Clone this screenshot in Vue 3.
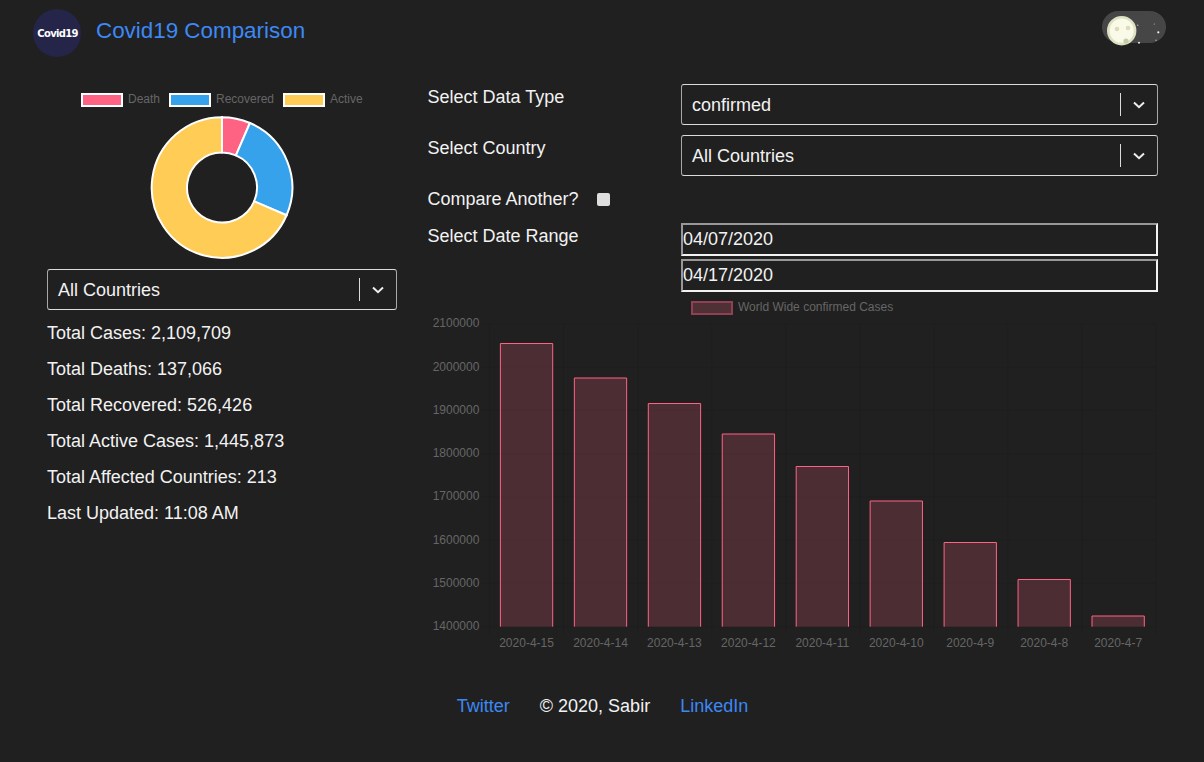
<script setup>
const stats = [
  'Total Cases: 2,109,709',
  'Total Deaths: 137,066',
  'Total Recovered: 526,426',
  'Total Active Cases: 1,445,873',
  'Total Affected Countries: 213',
  'Last Updated: 11:08 AM'
]

const cx = 222
const cy = 187.5
const outer = 70.3
const inner = 35
const slices = [
  { value: 137066, color: '#ff6384' },
  { value: 526426, color: '#36a2eb' },
  { value: 1445873, color: '#ffcd56' }
]
const total = slices.reduce((s, d) => s + d.value, 0)
let angle = -Math.PI / 2
const point = (r, a) => `${(cx + r * Math.cos(a)).toFixed(2)} ${(cy + r * Math.sin(a)).toFixed(2)}`
const arcs = slices.map((s) => {
  const start = angle
  const end = start + (s.value / total) * Math.PI * 2
  angle = end
  const large = end - start > Math.PI ? 1 : 0
  return {
    color: s.color,
    d: `M${point(outer, start)} A${outer} ${outer} 0 ${large} 1 ${point(outer, end)} L${point(inner, end)} A${inner} ${inner} 0 ${large} 0 ${point(inner, start)} Z`
  }
})

const legend = [
  { x: 82, label: 'Death', lx: 128, color: '#ff6384' },
  { x: 170, label: 'Recovered', lx: 216, color: '#36a2eb' },
  { x: 284, label: 'Active', lx: 330, color: '#ffcd56' }
]

const bottom = 626.7
const yTicks = ['2100000', '2000000', '1900000', '1800000', '1700000', '1600000', '1500000', '1400000'].map((label, i) => ({
  label,
  y: 323.9 + i * 43.25
}))
const gridX = Array.from({ length: 10 }, (_, i) => 489.5 + i * 74.05)
const barTops = [343.5, 378, 403.5, 434, 466.5, 501, 542.5, 579.5, 616]
const barNames = ['2020-4-15', '2020-4-14', '2020-4-13', '2020-4-12', '2020-4-11', '2020-4-10', '2020-4-9', '2020-4-8', '2020-4-7']
const bars = barTops.map((top, i) => {
  const x = 500.4 + i * 73.95
  const w = 52.3
  return {
    name: barNames[i],
    mid: x + w / 2,
    fill: `M${x} ${top} H${x + w} V${bottom} H${x} Z`,
    edge: `M${x} ${bottom} V${top} H${x + w} V${bottom}`
  }
})
</script>

<template>
  <div class="page">
    <header class="top">
      <div class="brand">
        <div class="logo"><span>Covid19</span></div>
        <h1 class="title">Covid19 Comparison</h1>
      </div>
      <svg class="toggle" width="70" height="40" viewBox="1098 9 70 40" aria-label="Theme toggle">
        <rect x="1102" y="11" width="64" height="32" rx="16" fill="#464646" />
        <circle cx="1137.7" cy="25.3" r="0.7" fill="#bbb" />
        <circle cx="1154.3" cy="24" r="0.6" fill="#bbb" />
        <circle cx="1158.3" cy="32.3" r="1.1" fill="#eee" />
        <circle cx="1156" cy="40.3" r="0.7" fill="#bbb" />
        <circle cx="1139" cy="42.7" r="1" fill="#eee" />
        <circle cx="1121.7" cy="30.7" r="13.4" fill="#fafae8" stroke="#dfe2c2" stroke-width="2.6" />
        <circle cx="1117" cy="29" r="2.3" fill="#dcdcbc" />
        <circle cx="1128" cy="28" r="2.3" fill="#dcdcbc" />
        <circle cx="1126" cy="41" r="2.6" fill="#c8cbaa" />
      </svg>
    </header>

    <main class="content">
      <section class="left">
        <svg class="donut" width="350" height="177" viewBox="47 85 350 177">
          <g v-for="item in legend" :key="item.label">
            <rect :x="item.x" y="94" width="40" height="12" :fill="item.color" stroke="#fff" stroke-width="2" />
            <text class="tick" :x="item.lx" y="103">{{ item.label }}</text>
          </g>
          <path v-for="arc in arcs" :key="arc.color" :d="arc.d" :fill="arc.color" stroke="#fff" stroke-width="2" />
        </svg>
        <div class="select">
          <span class="value">All Countries</span>
          <span class="sep"></span>
          <svg class="chev" width="12" height="8" viewBox="0 0 12 8"><path d="M1 1.5 L6 6.2 L11 1.5" fill="none" stroke="#eee" stroke-width="2" /></svg>
        </div>
        <ul class="stats">
          <li v-for="line in stats" :key="line">{{ line }}</li>
        </ul>
      </section>

      <section class="right">
        <div class="form">
          <label class="label">Select Data Type</label>
          <div class="select">
            <span class="value">confirmed</span>
            <span class="sep"></span>
            <svg class="chev" width="12" height="8" viewBox="0 0 12 8"><path d="M1 1.5 L6 6.2 L11 1.5" fill="none" stroke="#eee" stroke-width="2" /></svg>
          </div>
          <label class="label">Select Country</label>
          <div class="select">
            <span class="value">All Countries</span>
            <span class="sep"></span>
            <svg class="chev" width="12" height="8" viewBox="0 0 12 8"><path d="M1 1.5 L6 6.2 L11 1.5" fill="none" stroke="#eee" stroke-width="2" /></svg>
          </div>
          <div class="compare">
            <span>Compare Another?</span>
            <input class="check" type="checkbox" />
          </div>
          <label class="label date-label">Select Date Range</label>
          <div class="dates">
            <input class="date" type="text" value="04/07/2020" />
            <input class="date" type="text" value="04/17/2020" />
          </div>
        </div>

        <svg class="bars" width="731" height="364" viewBox="427 296 731 364">
          <rect x="692" y="302" width="40" height="12" fill="#4f3034" stroke="#8f4054" stroke-width="2" />
          <text class="tick" x="738" y="311">World Wide confirmed Cases</text>
          <line v-for="x in gridX" :key="x" :x1="x" :x2="x" y1="324" y2="636.5" class="grid" />
          <line v-for="t in yTicks" :key="t.label" x1="480" x2="1156" :y1="t.y" :y2="t.y" class="grid" />
          <text v-for="t in yTicks" :key="'l' + t.label" class="tick" x="479.4" :y="t.y + 3.4" text-anchor="end">{{ t.label }}</text>
          <g v-for="b in bars" :key="b.name">
            <path :d="b.fill" fill="rgba(255,99,132,0.2)" />
            <path :d="b.edge" fill="none" stroke="#ff6384" stroke-width="1" />
            <text class="tick" :x="b.mid" y="647" text-anchor="middle">{{ b.name }}</text>
          </g>
        </svg>
      </section>
    </main>

    <footer class="foot">
      <a class="link">Twitter</a>
      <span>© 2020, Sabir</span>
      <a class="link">LinkedIn</a>
    </footer>
  </div>
</template>

<style>
html, body {
  background: #202020;
}
</style>

<style scoped>
.page {
  width: 1204px;
  height: 762px;
  overflow: hidden;
  background: #202020;
  color: #f2f2f2;
  font-family: "Liberation Sans", Arial, sans-serif;
  font-size: 18px;
}
.top {
  display: flex;
  justify-content: space-between;
  align-items: flex-start;
  height: 84px;
  box-sizing: border-box;
  padding: 9px 36px 0 33px;
}
.brand {
  display: flex;
  align-items: flex-start;
  gap: 15px;
}
.logo {
  width: 48px;
  height: 48px;
  border-radius: 50%;
  background: #25254a;
  display: flex;
  align-items: center;
  justify-content: center;
}
.logo span {
  color: #fff;
  font-family: "DejaVu Sans", sans-serif;
  font-weight: 700;
  font-size: 10px;
  letter-spacing: -0.7px;
  margin-left: 1px;
}
.title {
  margin: 7px 0 0;
  font-size: 22.4px;
  line-height: 30px;
  font-weight: 400;
  color: #3d88f5;
}
.toggle {
  display: block;
}
.content {
  display: flex;
  padding-left: 47px;
  gap: 30px;
}
.left {
  width: 350px;
  padding-top: 1px;
}
.donut {
  display: block;
  margin-bottom: 7px;
}
.select {
  display: flex;
  align-items: center;
  height: 41px;
  box-sizing: border-box;
  border-style: solid;
  border-width: 1px;
  border-color: #dcdcdc #a8a8a8;
  border-radius: 3px;
  padding: 0 12px 0 10px;
}
.value {
  flex: 1;
  padding-top: 2px;
}
.sep {
  width: 1px;
  height: 23px;
  background: #dcdcdc;
  margin-right: 12px;
}
.chev {
  display: block;
}
.stats {
  list-style: none;
  margin: 5px 0 0;
  padding: 0;
}
.stats li {
  height: 36px;
  line-height: 36px;
}
.right {
  width: 731px;
}
.form {
  display: grid;
  grid-template-columns: 254px 477px;
  row-gap: 10px;
}
.label {
  line-height: 26px;
  padding-left: 0.5px;
}
.compare {
  grid-column: 1 / -1;
  display: flex;
  align-items: center;
  height: 26px;
  gap: 18.5px;
  margin-bottom: 1px;
  padding-left: 0.5px;
}
.check {
  appearance: none;
  width: 13px;
  height: 13px;
  margin: 0;
  background: #dedede;
  border-radius: 2px;
}
.date-label {
  line-height: 26px;
}
.dates {
  display: flex;
  flex-direction: column;
  gap: 3px;
}
.date {
  width: 100%;
  height: 33px;
  box-sizing: border-box;
  background: #202020;
  color: #f2f2f2;
  border-width: 2px;
  border-style: solid;
  border-color: #989898 #f2f2f2 #f2f2f2 #989898;
  padding: 1px 0;
  font-family: inherit;
  font-size: 18px;
  outline: none;
}
.bars {
  display: block;
  margin-top: 4px;
}
.grid {
  stroke: rgba(0, 0, 0, 0.07);
  stroke-width: 1;
}
.tick {
  fill: #666;
  font-size: 12px;
  font-family: "Liberation Sans", Arial, sans-serif;
}
.foot {
  display: flex;
  justify-content: center;
  gap: 30px;
  margin-top: 33px;
  margin-left: 1px;
  line-height: 26px;
}
.link {
  color: #3d88f5;
}
</style>
